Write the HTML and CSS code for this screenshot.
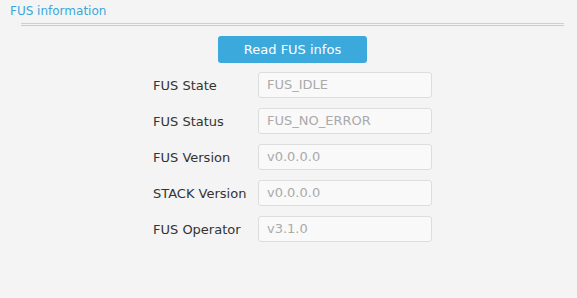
FILE: index.html
```html
<!DOCTYPE html>
<html>
<head>
<meta charset="utf-8">
<link rel="stylesheet" href="styles.css">
</head>
<body>
<div class="panel">
  <div class="title">FUS information</div>
  <div class="content">
    <div class="sep"></div>
    <button class="btn">Read FUS infos</button>
    <div class="form">
      <div class="label">FUS State</div><div class="field">FUS_IDLE</div>
      <div class="label">FUS Status</div><div class="field">FUS_NO_ERROR</div>
      <div class="label">FUS Version</div><div class="field">v0.0.0.0</div>
      <div class="label">STACK Version</div><div class="field">v0.0.0.0</div>
      <div class="label">FUS Operator</div><div class="field">v3.1.0</div>
    </div>
  </div>
</div>
</body>
</html>
```
FILE: styles.css
```css
html, body {
  margin: 0;
  padding: 0;
  background: #f4f4f4;
  font-family: "DejaVu Sans", sans-serif;
  font-size: 13px;
  color: #333;
}
.panel {
  width: 577px;
  height: 298px;
  box-sizing: border-box;
}
.title {
  color: #3aa7db;
  font-size: 12px;
  padding: 4px 0 0 10px;
  height: 15px;
  line-height: 15px;
}
.content {
  margin: 0 13px 0 21px;
  display: flex;
  flex-direction: column;
  align-items: center;
}
.sep {
  align-self: stretch;
  margin-top: 4px;
  height: 1px;
  border-top: 1px solid #cfcfcf;
  border-bottom: 1px solid #a9d6ea;
  background: #f4f4f4;
  box-sizing: content-box;
}
.btn {
  margin-top: 10px;
  width: 149px;
  height: 27px;
  border: none;
  border-radius: 3px;
  background: #3ca9dc;
  color: #fff;
  font-family: "DejaVu Sans", sans-serif;
  font-size: 13px;
  padding: 0;
}
.form {
  margin-top: 9px;
  display: grid;
  grid-template-columns: 105px 174px;
  row-gap: 10px;
  align-items: center;
}
.label {
  color: #333;
}
.field {
  height: 26px;
  box-sizing: border-box;
  border: 1px solid #dddddd;
  border-radius: 3px;
  background: #f9f9f9;
  color: #aaaaaa;
  padding-left: 8px;
  line-height: 24px;
}
```
